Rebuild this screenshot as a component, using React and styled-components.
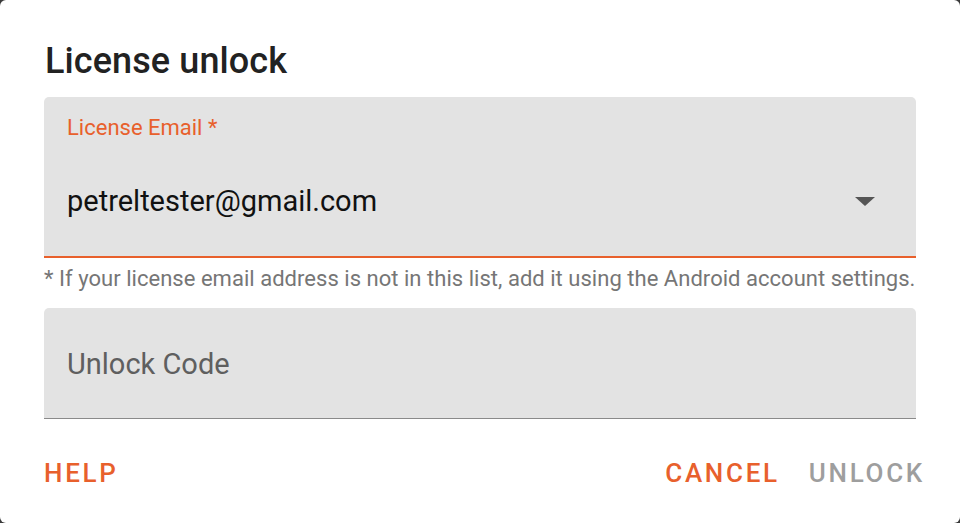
import React from "react";
import styled, { createGlobalStyle } from "styled-components";

const GlobalStyle = createGlobalStyle`
  html, body {
    margin: 0;
    padding: 0;
    background: #3a3a3a;
    font-family: Roboto, "Noto Sans", sans-serif;
  }
`;

const accent = "#e8602c";

const Dialog = styled.div`
  box-sizing: border-box;
  width: 960px;
  height: 523px;
  background: #fff;
  border-radius: 6px;
  padding: 41px 44px 0 44px;
  display: flex;
  flex-direction: column;
`;

const Title = styled.h1`
  margin: 0 0 0 1px;
  font-size: 36px;
  font-weight: 500;
  letter-spacing: 0.1px;
  color: #222;
  line-height: 40px;
  height: 56px;
`;

const Field = styled.div`
  box-sizing: border-box;
  width: 872px;
  height: ${(p) => p.height}px;
  background: #e3e3e3;
  border-radius: 5px 5px 0 0;
  border-bottom: ${(p) => (p.focused ? `2px solid ${accent}` : "1px solid #8a8a8a")};
  padding: 0 23px;
  display: flex;
  flex-direction: column;
  justify-content: ${(p) => (p.focused ? "flex-start" : "center")};
`;

const FieldLabel = styled.div`
  margin-top: 18px;
  font-size: 22px;
  line-height: 26px;
  color: ${accent};
`;

const ValueRow = styled.div`
  display: flex;
  align-items: center;
  justify-content: space-between;
  margin-top: 43px;
  padding-right: 18px;
`;

const Value = styled.div`
  font-size: 29px;
  line-height: 34px;
  color: #111;
`;

const Placeholder = styled.div`
  font-size: 29px;
  line-height: 34px;
  color: #5f5f5f;
  margin-top: 1px;
`;

const Arrow = styled.div`
  width: 0;
  height: 0;
  border-left: 10px solid transparent;
  border-right: 10px solid transparent;
  border-top: 9px solid #555;
`;

const Helper = styled.div`
  font-size: 22px;
  line-height: 26px;
  letter-spacing: 0.03px;
  color: #767676;
  margin: 8px 0 16px 0;
  white-space: nowrap;
`;

const Actions = styled.div`
  display: flex;
  align-items: center;
  justify-content: space-between;
  margin-top: 38px;
  margin-right: -9px;
`;

const Group = styled.div`
  display: flex;
  gap: 29px;
`;

const Button = styled.button`
  background: none;
  border: none;
  padding: 0;
  font-family: Roboto, "Noto Sans", sans-serif;
  font-size: 26px;
  font-weight: 500;
  letter-spacing: 2.7px;
  line-height: 32px;
  color: ${(p) => (p.disabled ? "#9e9e9e" : accent)};
`;

export default function App() {
  return (
    <>
      <GlobalStyle />
      <Dialog>
        <Title>License unlock</Title>
        <Field height={161} focused>
          <FieldLabel>License Email *</FieldLabel>
          <ValueRow>
            <Value>petreltester@gmail.com</Value>
            <Arrow />
          </ValueRow>
        </Field>
        <Helper>
          * If your license email address is not in this list, add it using the Android account settings.
        </Helper>
        <Field height={111}>
          <Placeholder>Unlock Code</Placeholder>
        </Field>
        <Actions>
          <Button>HELP</Button>
          <Group>
            <Button>CANCEL</Button>
            <Button disabled>UNLOCK</Button>
          </Group>
        </Actions>
      </Dialog>
    </>
  );
}
